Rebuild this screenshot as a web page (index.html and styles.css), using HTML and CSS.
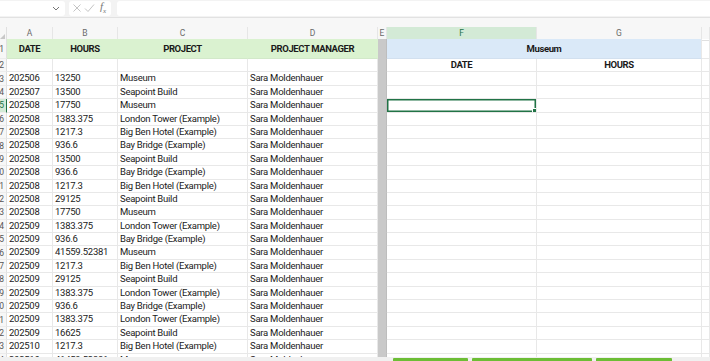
FILE: index.html
```html
<!DOCTYPE html>
<html lang="en">
<head>
  <meta charset="UTF-8">
  <meta name="viewport" content="width=device-width, initial-scale=1.0">
  <title>Hours by project</title>
  <link rel="stylesheet" href="styles.css">
</head>
<body>
  <div class="app">
    <div class="formula-bar">
      <div class="name-box">
        <svg class="chevron" width="8" height="5" viewBox="0 0 8 5"><path d="M1 1l3 3 3-3" fill="none" stroke="#777" stroke-width="1"/></svg>
      </div>
      <div class="fx-box">
        <svg width="10" height="10" viewBox="0 0 10 10"><path d="M1.5 1.5l7 7M8.5 1.5l-7 7" stroke="#c4c4c4" stroke-width="1"/></svg>
        <svg width="11" height="10" viewBox="0 0 11 10"><path d="M1 5.5l3 3 6-7" fill="none" stroke="#c4c4c4" stroke-width="1"/></svg>
        <span class="fx">f<sub>x</sub></span>
      </div>
      <div class="formula-input"></div>
    </div>
    <div class="header-gap"></div>

    <div class="sheet">
      <div class="row col-heads">
        <div class="corner"><span class="tri"></span></div>
        <div class="ch">A</div>
        <div class="ch">B</div>
        <div class="ch">C</div>
        <div class="ch">D</div>
        <div class="ch">E</div>
        <div class="ch active">F</div>
        <div class="ch">G</div>
        <div class="ch"></div>
      </div>

      <div class="row r1">
        <div class="rh">1</div>
        <div class="c hd green">DATE</div>
        <div class="c hd green">HOURS</div>
        <div class="c hd green">PROJECT</div>
        <div class="c hd green">PROJECT MANAGER</div>
        <div class="c gap"></div>
        <div class="c hd blue span2">Museum</div>
        <div class="c"></div>
      </div>
      <div class="row">
        <div class="rh">2</div>
        <div class="c"></div><div class="c"></div><div class="c"></div><div class="c"></div>
        <div class="c gap"></div>
        <div class="c hd">DATE</div>
        <div class="c hd">HOURS</div>
        <div class="c"></div>
      </div>

      <div class="row"><div class="rh">3</div><div class="c">202506</div><div class="c">13250</div><div class="c">Museum</div><div class="c">Sara Moldenhauer</div><div class="c gap"></div><div class="c"></div><div class="c"></div><div class="c"></div></div>
      <div class="row"><div class="rh">4</div><div class="c">202507</div><div class="c">13500</div><div class="c">Seapoint Build</div><div class="c">Sara Moldenhauer</div><div class="c gap"></div><div class="c"></div><div class="c"></div><div class="c"></div></div>
      <div class="row"><div class="rh on">5</div><div class="c">202508</div><div class="c">17750</div><div class="c">Museum</div><div class="c">Sara Moldenhauer</div><div class="c gap"></div><div class="c sel"></div><div class="c"></div><div class="c"></div></div>
      <div class="row"><div class="rh">6</div><div class="c">202508</div><div class="c">1383.375</div><div class="c">London Tower (Example)</div><div class="c">Sara Moldenhauer</div><div class="c gap"></div><div class="c"></div><div class="c"></div><div class="c"></div></div>
      <div class="row"><div class="rh">7</div><div class="c">202508</div><div class="c">1217.3</div><div class="c">Big Ben Hotel (Example)</div><div class="c">Sara Moldenhauer</div><div class="c gap"></div><div class="c"></div><div class="c"></div><div class="c"></div></div>
      <div class="row"><div class="rh">8</div><div class="c">202508</div><div class="c">936.6</div><div class="c">Bay Bridge (Example)</div><div class="c">Sara Moldenhauer</div><div class="c gap"></div><div class="c"></div><div class="c"></div><div class="c"></div></div>
      <div class="row"><div class="rh">9</div><div class="c">202508</div><div class="c">13500</div><div class="c">Seapoint Build</div><div class="c">Sara Moldenhauer</div><div class="c gap"></div><div class="c"></div><div class="c"></div><div class="c"></div></div>
      <div class="row"><div class="rh">10</div><div class="c">202508</div><div class="c">936.6</div><div class="c">Bay Bridge (Example)</div><div class="c">Sara Moldenhauer</div><div class="c gap"></div><div class="c"></div><div class="c"></div><div class="c"></div></div>
      <div class="row"><div class="rh">11</div><div class="c">202508</div><div class="c">1217.3</div><div class="c">Big Ben Hotel (Example)</div><div class="c">Sara Moldenhauer</div><div class="c gap"></div><div class="c"></div><div class="c"></div><div class="c"></div></div>
      <div class="row"><div class="rh">12</div><div class="c">202508</div><div class="c">29125</div><div class="c">Seapoint Build</div><div class="c">Sara Moldenhauer</div><div class="c gap"></div><div class="c"></div><div class="c"></div><div class="c"></div></div>
      <div class="row"><div class="rh">13</div><div class="c">202508</div><div class="c">17750</div><div class="c">Museum</div><div class="c">Sara Moldenhauer</div><div class="c gap"></div><div class="c"></div><div class="c"></div><div class="c"></div></div>
      <div class="row"><div class="rh">14</div><div class="c">202509</div><div class="c">1383.375</div><div class="c">London Tower (Example)</div><div class="c">Sara Moldenhauer</div><div class="c gap"></div><div class="c"></div><div class="c"></div><div class="c"></div></div>
      <div class="row"><div class="rh">15</div><div class="c">202509</div><div class="c">936.6</div><div class="c">Bay Bridge (Example)</div><div class="c">Sara Moldenhauer</div><div class="c gap"></div><div class="c"></div><div class="c"></div><div class="c"></div></div>
      <div class="row"><div class="rh">16</div><div class="c">202509</div><div class="c">41559.52381</div><div class="c">Museum</div><div class="c">Sara Moldenhauer</div><div class="c gap"></div><div class="c"></div><div class="c"></div><div class="c"></div></div>
      <div class="row"><div class="rh">17</div><div class="c">202509</div><div class="c">1217.3</div><div class="c">Big Ben Hotel (Example)</div><div class="c">Sara Moldenhauer</div><div class="c gap"></div><div class="c"></div><div class="c"></div><div class="c"></div></div>
      <div class="row"><div class="rh">18</div><div class="c">202509</div><div class="c">29125</div><div class="c">Seapoint Build</div><div class="c">Sara Moldenhauer</div><div class="c gap"></div><div class="c"></div><div class="c"></div><div class="c"></div></div>
      <div class="row"><div class="rh">19</div><div class="c">202509</div><div class="c">1383.375</div><div class="c">London Tower (Example)</div><div class="c">Sara Moldenhauer</div><div class="c gap"></div><div class="c"></div><div class="c"></div><div class="c"></div></div>
      <div class="row"><div class="rh">20</div><div class="c">202509</div><div class="c">936.6</div><div class="c">Bay Bridge (Example)</div><div class="c">Sara Moldenhauer</div><div class="c gap"></div><div class="c"></div><div class="c"></div><div class="c"></div></div>
      <div class="row"><div class="rh">21</div><div class="c">202509</div><div class="c">1383.375</div><div class="c">London Tower (Example)</div><div class="c">Sara Moldenhauer</div><div class="c gap"></div><div class="c"></div><div class="c"></div><div class="c"></div></div>
      <div class="row"><div class="rh">22</div><div class="c">202509</div><div class="c">16625</div><div class="c">Seapoint Build</div><div class="c">Sara Moldenhauer</div><div class="c gap"></div><div class="c"></div><div class="c"></div><div class="c"></div></div>
      <div class="row"><div class="rh">23</div><div class="c">202510</div><div class="c">1217.3</div><div class="c">Big Ben Hotel (Example)</div><div class="c">Sara Moldenhauer</div><div class="c gap"></div><div class="c"></div><div class="c"></div><div class="c"></div></div>
      <div class="row"><div class="rh">24</div><div class="c">202510</div><div class="c">41459.52381</div><div class="c">Museum</div><div class="c">Sara Moldenhauer</div><div class="c gap"></div><div class="c"></div><div class="c"></div><div class="c"></div></div>
    </div>

    <div class="tabs">
      <span class="tab t1"></span>
      <span class="tab t2"></span>
      <span class="tab t3"></span>
    </div>
  </div>
</body>
</html>
```

FILE: styles.css
```css
* {
  box-sizing: border-box;
  margin: 0;
  padding: 0;
}

body {
  font-family: Roboto, "Liberation Sans", sans-serif;
  background-color: #fff;
  color: #1a1a1a;
  overflow: hidden;
}

.app {
  display: flex;
  flex-direction: column;
  height: 100vh;
}

/* barra de fórmulas */
.formula-bar {
  display: flex;
  align-items: center;
  height: 18px;
  background-color: #f3f3f3;
  border-bottom: 1px solid #e2e2e2;
  padding: 1px 0 2px;
}

.name-box {
  width: 65px;
  height: 15px;
  background-color: #fff;
  border-radius: 0 3px 3px 0;
  display: flex;
  align-items: center;
  justify-content: flex-end;
  padding-right: 5px;
}

.fx-box {
  margin-left: 4px;
  width: 42px;
  height: 15px;
  background-color: #fff;
  border-radius: 3px;
  display: flex;
  align-items: center;
  gap: 2px;
  padding-left: 3px;
}

.fx {
  font-family: "Liberation Serif", serif;
  font-style: italic;
  font-size: 11px;
  color: #777;
  margin-left: 3px;
}

.fx sub {
  font-size: 7px;
}

.formula-input {
  margin-left: 6px;
  flex: 1;
  height: 15px;
  background-color: #fff;
  border-radius: 3px 0 0 3px;
}

.header-gap {
  height: 9px;
  background-color: #f7f7f7;
}

/* grade */
.sheet {
  flex: 1;
  overflow: hidden;
}

.row {
  display: grid;
  grid-template-columns: 7px 46px 65px 130px 130px 9px 150px 165px 1fr;
  height: 13.4px;
}

.col-heads {
  height: 12px;
  background-color: #f7f7f7;
}

.corner {
  position: relative;
  border-right: 1px solid #e0e0e0;
}

.tri {
  position: absolute;
  right: 1px;
  bottom: 2px;
  width: 0;
  height: 0;
  border-left: 5px solid transparent;
  border-bottom: 5px solid #c8c8c8;
}

.ch {
  font-size: 8.5px;
  color: #6a6a6a;
  text-align: center;
  line-height: 13px;
  border-right: 1px solid #e6e6e6;
  border-bottom: 1px solid #e0e0e0;
}

.ch.active {
  background-color: #d3ead6;
  color: #217346;
  border-bottom: 1.5px solid #217346;
}

.r1 {
  height: 20px;
}

.rh {
  display: flex;
  justify-content: flex-end;
  align-items: center;
  overflow: hidden;
  font-size: 8.5px;
  color: #555;
  background-color: #f7f7f7;
  border-right: 1px solid #e0e0e0;
  border-bottom: 1px solid #ececec;
  padding-right: 2px;
}

.rh.on {
  background-color: #d3ead6;
  color: #217346;
  border-right: 1.5px solid #217346;
}

.c {
  font-size: 9.5px;
  letter-spacing: -0.25px;
  line-height: 12.8px;
  white-space: nowrap;
  overflow: hidden;
  padding-left: 2px;
  border-right: 1px solid #e8e8e8;
  border-bottom: 1px solid #e8e8e8;
}

.hd {
  font-weight: bold;
  text-align: center;
  padding-left: 0;
  letter-spacing: -0.4px;
}

.r1 .c {
  line-height: 20px;
}

.green {
  background-color: #daf2d0;
  border-right-color: #daf2d0;
  border-bottom-color: #d2e8c9;
}

.blue {
  background-color: #dae9f8;
  border-bottom-color: #d2e0ef;
}

.span2 {
  grid-column: span 2;
}

.gap {
  background-color: #c9c9c9;
  border-right-color: #bdbdbd;
  border-bottom-color: #c9c9c9;
}

.sel {
  position: relative;
  box-shadow: inset 0 0 0 1.5px #217346;
}

.sel::after {
  content: "";
  position: absolute;
  right: -2px;
  bottom: -2px;
  width: 4px;
  height: 4px;
  background-color: #217346;
  border: 1px solid #fff;
}

/* abas da planilha */
.tabs {
  height: 4px;
  background-color: #f0f0f0;
  display: flex;
  align-items: flex-end;
  padding-left: 393px;
  gap: 4px;
}

.tab {
  height: 3px;
  background-color: #6cbd35;
  border-radius: 1px 1px 0 0;
}

.t1 {
  width: 75px;
}

.t2 {
  width: 120px;
}

.t3 {
  width: 76px;
}
```
